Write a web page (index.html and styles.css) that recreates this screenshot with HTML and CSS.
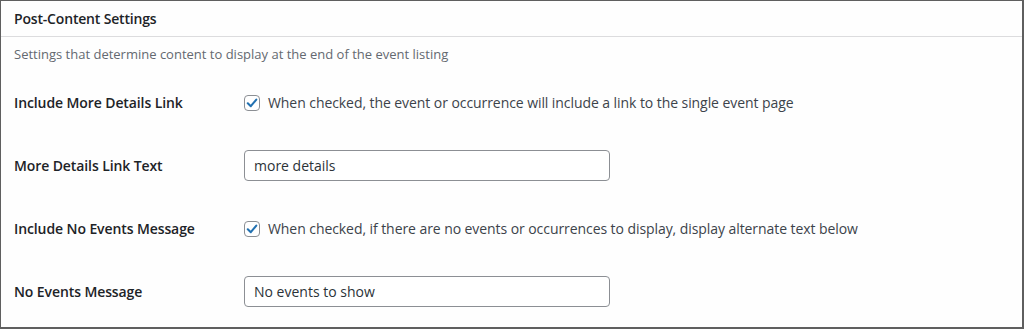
FILE: index.html
```html
<!DOCTYPE html>
<html>
<head>
<meta charset="UTF-8">
<title>Post-Content Settings</title>
<link rel="stylesheet" href="styles.css">
</head>
<body>
<div class="postbox">
  <h2 class="hndle">Post-Content Settings</h2>
  <p class="desc">Settings that determine content to display at the end of the event listing</p>

  <div class="form">
    <div class="row">
      <div class="label">Include More Details Link</div>
      <label class="check">
        <span class="box"><svg width="16" height="16" viewBox="0 0 16 16"><path d="M3.8 8.3 L6.8 11.2 L12.3 4.6" fill="none" stroke="#2271b1" stroke-width="2.1" stroke-linecap="round" stroke-linejoin="round"/></svg></span>
        When checked, the event or occurrence will include a link to the single event page
      </label>
    </div>

    <div class="row">
      <div class="label">More Details Link Text</div>
      <input class="text" type="text" value="more details">
    </div>

    <div class="row">
      <div class="label">Include No Events Message</div>
      <label class="check">
        <span class="box"><svg width="16" height="16" viewBox="0 0 16 16"><path d="M3.8 8.3 L6.8 11.2 L12.3 4.6" fill="none" stroke="#2271b1" stroke-width="2.1" stroke-linecap="round" stroke-linejoin="round"/></svg></span>
        When checked, if there are no events or occurrences to display, display alternate text below
      </label>
    </div>

    <div class="row">
      <div class="label">No Events Message</div>
      <input class="text" type="text" value="No events to show">
    </div>
  </div>
</div>
</body>
</html>
```

FILE: styles.css
```css
body { margin: 0; background: #fff; font-family: "Open Sans", "Noto Sans", sans-serif; font-size: 13px; color: #3c434a; }
.postbox { height: 329px; box-sizing: border-box; border: solid #5f5f5f; border-width: 1px 2px 2px 1px; background: #fefefe; }
.hndle { margin: 0; height: 36px; box-sizing: border-box; padding: 8px 13px; font-size: 14px; line-height: 20px; font-weight: 600; letter-spacing: -0.18px; color: #1d2327; border-bottom: 1px solid #dcdcde; }
.desc { margin: 0; padding: 7px 13px 0; line-height: 20px; color: #646970; }
.form { margin-top: 7px; padding-left: 13px; }
.row { display: flex; align-items: center; height: 63px; }
.label { width: 230px; font-size: 14px; font-weight: 600; letter-spacing: -0.1px; color: #1d2327; }
.check { display: flex; align-items: center; gap: 8px; font-size: 14px; letter-spacing: -0.07px; color: #3c434a; }
.box { width: 16px; height: 16px; box-sizing: border-box; border: 1px solid #8c8f94; border-radius: 4px; display: flex; align-items: center; justify-content: center; background: #fff; }
.box svg { display: block; flex: none; }
.text { width: 366px; height: 31px; box-sizing: border-box; margin: 0; padding: 0 9px; border: 1px solid #8c8f94; border-radius: 4px; font-family: inherit; font-size: 14px; color: #2c3338; background: #fff; }
```
